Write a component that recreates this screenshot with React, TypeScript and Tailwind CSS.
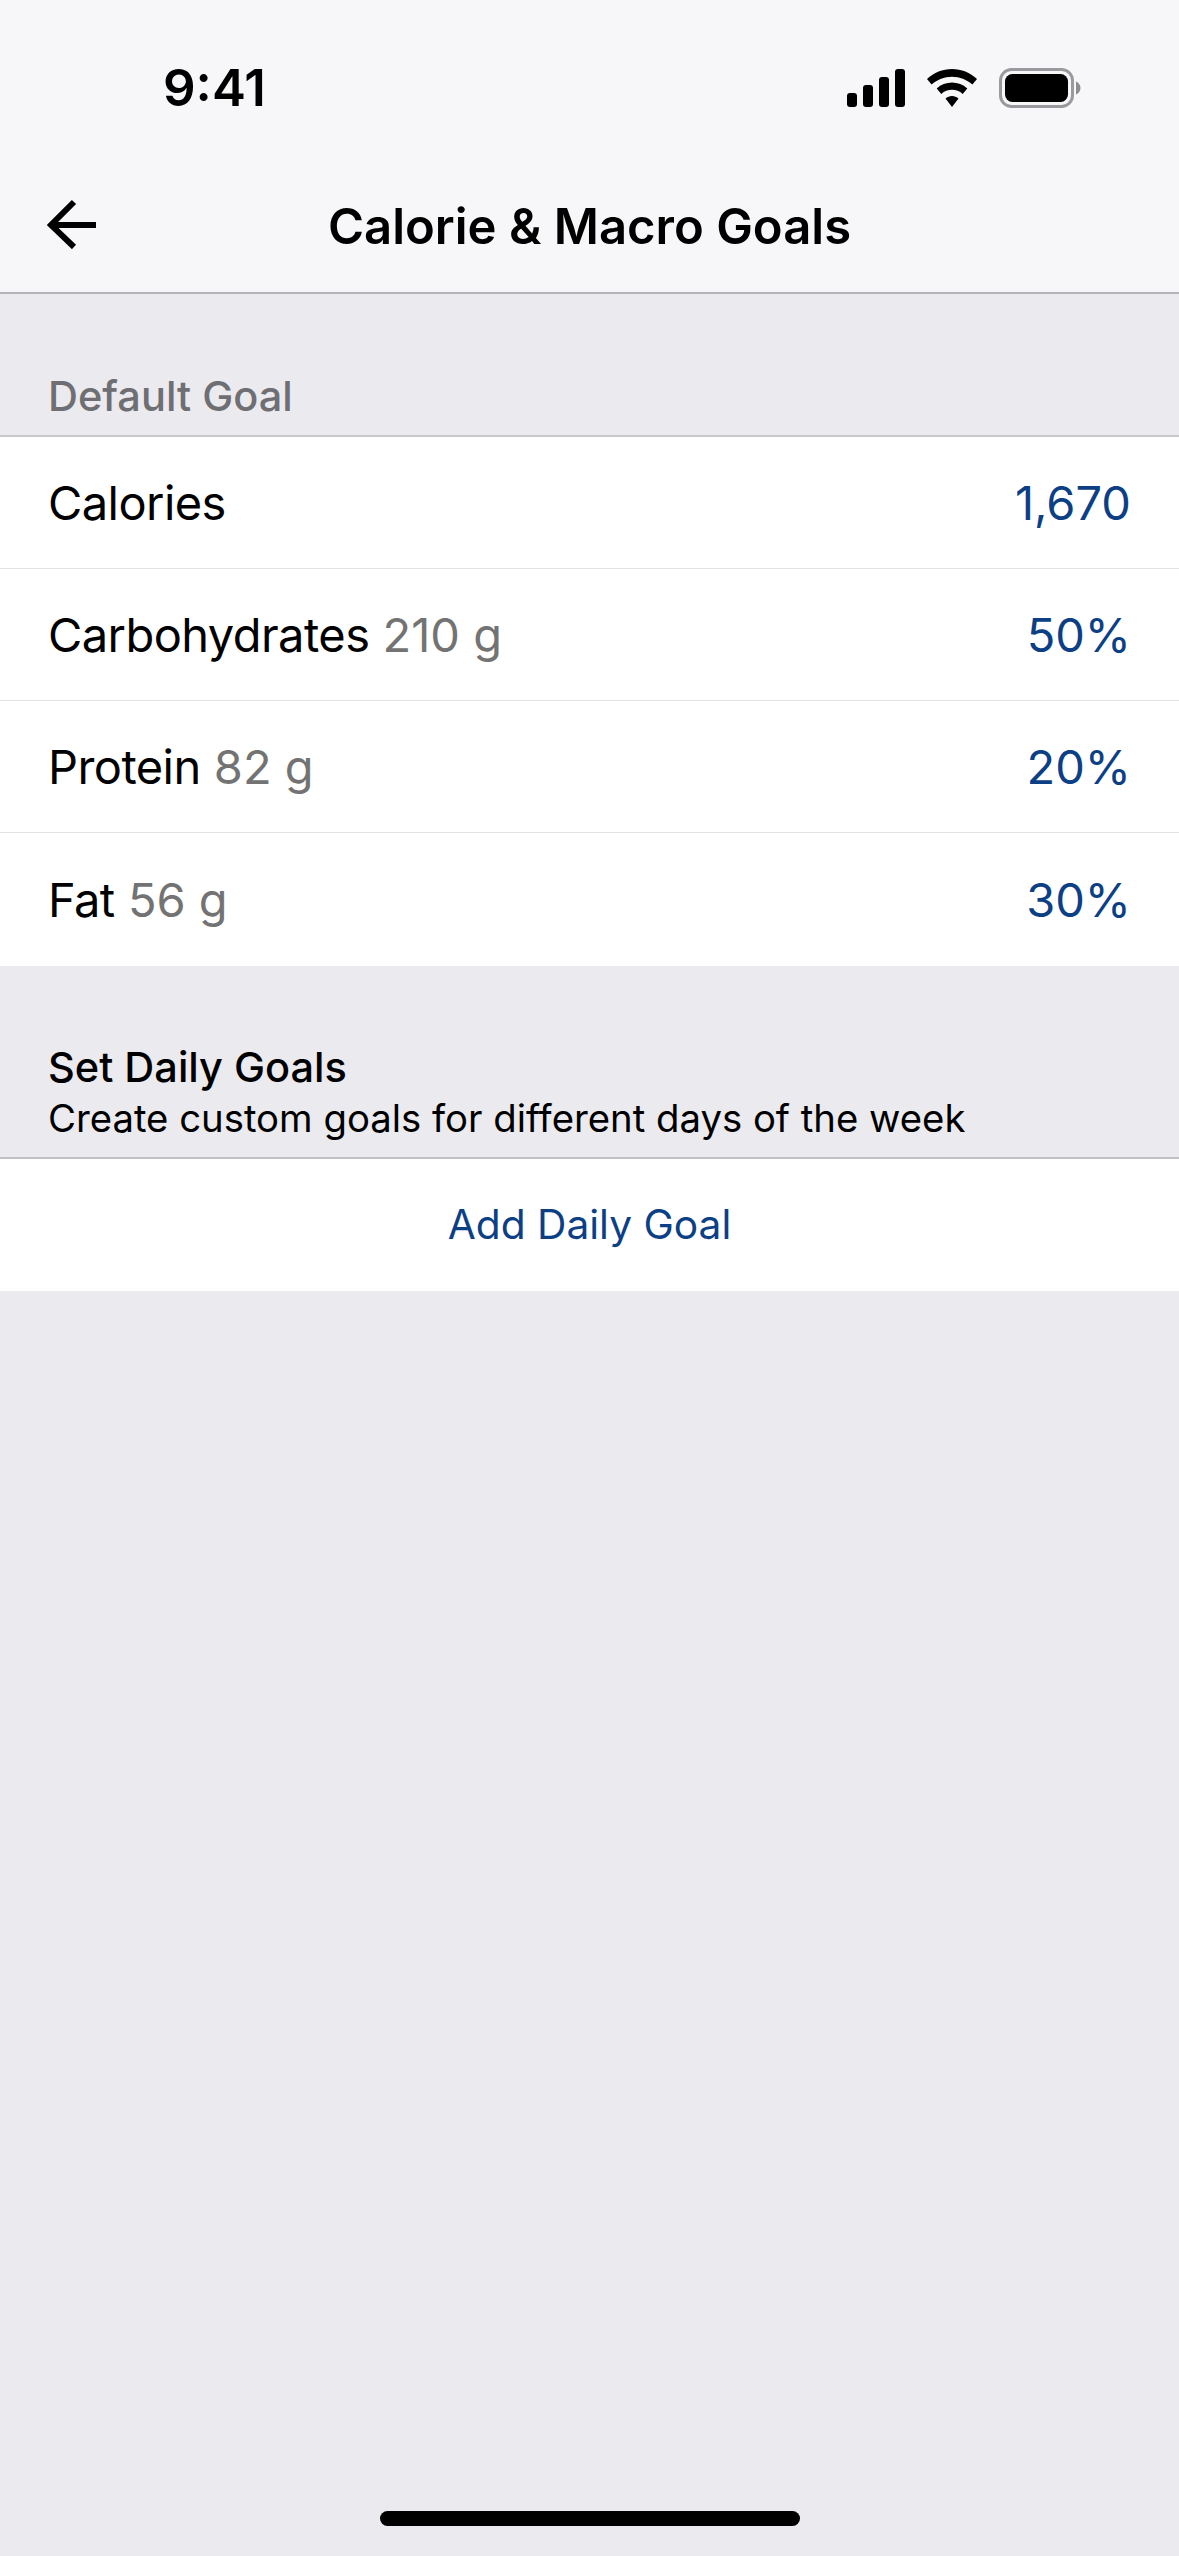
const FONT = "font-['Inter',sans-serif]"

function StatusIcons() {
  return (
    <div className="flex items-center gap-[22px]">
      <svg width="58" height="38" viewBox="0 0 58 38" fill="#000">
        <rect x="0" y="24" width="10" height="14" rx="3" />
        <rect x="16" y="16" width="10" height="22" rx="3" />
        <rect x="32" y="8" width="10" height="30" rx="3" />
        <rect x="48" y="0" width="10" height="38" rx="3" />
      </svg>
      <svg width="50" height="38" viewBox="0 0 50 38" fill="#000">
        <path d="M25 0c9.5 0 18 3.6 25 10l-4.6 5.6C39.700 10.600 32.700 7.800 25 7.800S10.300 10.600 4.600 15.600L0 10C7 3.600 15.500 0 25 0z" />
        <path d="M25 13.500c5.800 0 11 2.100 15.300 5.900l-4.600 5.500c-3-2.600-6.700-4.100-10.700-4.100s-7.700 1.500-10.700 4.100l-4.600-5.500C14 15.600 19.200 13.500 25 13.500z" />
        <path d="M25 27c2.500 0 4.700.9 6.500 2.400L25 38l-6.500-8.600C20.300 27.900 22.500 27 25 27z" />
      </svg>
      <svg width="82" height="40" viewBox="0 0 82 40">
        <rect x="1.500" y="1.500" width="72" height="37" rx="11" fill="none" stroke="#9a9a9e" strokeWidth="3" />
        <rect x="6" y="6" width="63" height="28" rx="7.500" fill="#000" />
        <path d="M77 13.500c2.500.8 4.500 3.400 4.500 6.500s-2 5.700-4.500 6.500z" fill="#8e8e92" />
      </svg>
    </div>
  )
}

function Row({ label, amount, value }: { label: string; amount?: string; value: string }) {
  return (
    <div className="flex h-[132px] items-center justify-between border-b border-[#e2e2e5] pl-[48px] pr-[48px] pt-[2px] text-[47px] last:h-[133px] last:border-b-0">
      <span className="text-black">
        <span className="tracking-[-0.012em]">{label}</span>
        {amount && <span className="text-[#737373]"> {amount}</span>}
      </span>
      <span className="text-[#0d3f85]">{value}</span>
    </div>
  )
}

export default function App() {
  return (
    <div className={`${FONT} flex min-h-[2556px] w-[1179px] flex-col bg-[#eaeaef]`}>
      <header className="h-[294px] border-b-2 border-[#b4b4b8] bg-[#f7f7fa]">
        <div className="flex h-[197px] items-start justify-between pl-[163px] pr-[98px] pt-[58px]">
          <span className="text-[51px] leading-[60px] font-semibold text-black">9:41</span>
          <div className="pt-[10px]">
            <StatusIcons />
          </div>
        </div>
        <div className="relative flex h-[60px] items-center justify-center">
          <svg className="absolute left-[47px] top-[2px]" width="50" height="50" viewBox="0 0 50 50" fill="none" stroke="#000" strokeWidth="6">
            <path d="M27 3 4 26l23 22" />
            <path d="M5 26h44" />
          </svg>
          <h1 className="text-[49px] font-semibold text-black">Calorie &amp; Macro Goals</h1>
        </div>
      </header>

      <div className="flex h-[141px] items-end pl-[48px] pb-[15px]">
        <span className="text-[41.500px] leading-[48px] font-medium text-[#6e6e73]">Default Goal</span>
      </div>
      <section className="border-t-2 border-[#c8c8cc] bg-white">
        <Row label="Calories" value="1,670" />
        <Row label="Carbohydrates" amount="210 g" value="50%" />
        <Row label="Protein" amount="82 g" value="20%" />
        <Row label="Fat" amount="56 g" value="30%" />
      </section>

      <div className="flex h-[191px] flex-col justify-end pl-[48px] pb-[14px] text-black">
        <span className="text-[41.500px] leading-[52px] font-medium">Set Daily Goals</span>
        <span className="text-[38.300px] leading-[50px]">Create custom goals for different days of the week</span>
      </div>
      <div className="flex h-[134px] items-center justify-center border-t-2 border-[#c0c0c4] bg-white text-[40.700px] text-[#0d3f85]">
        Add Daily Goal
      </div>

      <div className="mt-auto flex justify-center pb-[30px]">
        <div className="h-[15px] w-[420px] rounded-full bg-black" />
      </div>
    </div>
  )
}
